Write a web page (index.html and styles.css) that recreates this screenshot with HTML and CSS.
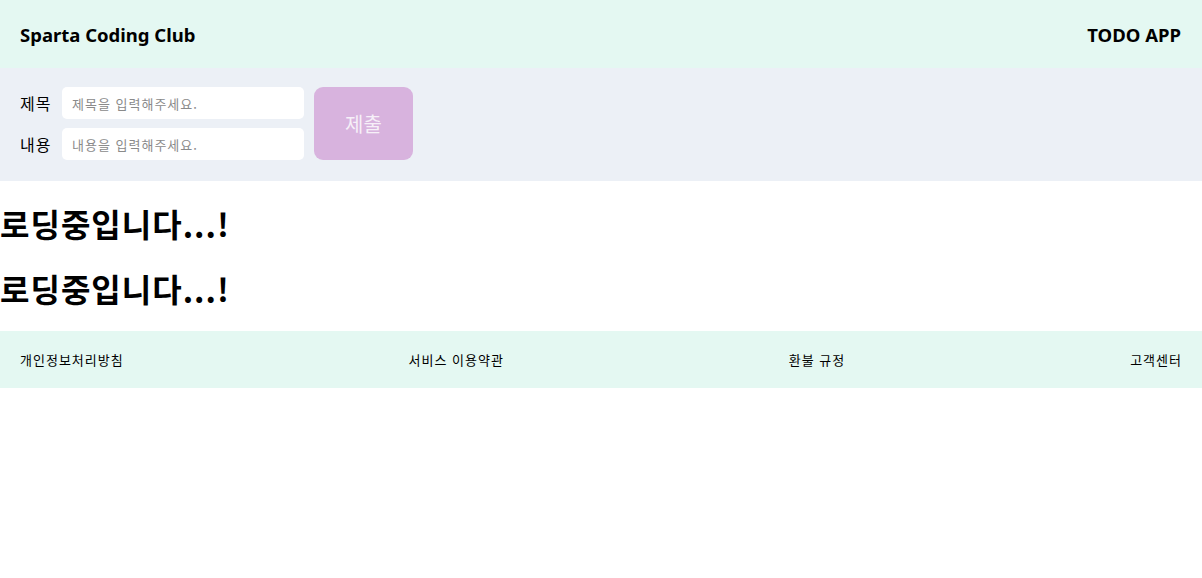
FILE: index.html
```html
<!DOCTYPE html>
<html lang="ko">
<head>
<meta charset="utf-8">
<title>TODO APP</title>
<link rel="stylesheet" href="styles.css">
</head>
<body>
<header class="top">
  <div class="brand">Sparta Coding Club</div>
  <div class="brand">TODO APP</div>
</header>
<section class="form-area">
  <div class="fields">
    <div class="row"><label class="lbl">제목</label><input class="inp" type="text" placeholder="제목을 입력해주세요."></div>
    <div class="row"><label class="lbl">내용</label><input class="inp" type="text" placeholder="내용을 입력해주세요."></div>
  </div>
  <button class="submit" type="button">제출</button>
</section>
<main>
  <h1 class="loading">로딩중입니다...!</h1>
  <h1 class="loading">로딩중입니다...!</h1>
</main>
<footer class="foot">
  <span>개인정보처리방침</span>
  <span>서비스 이용약관</span>
  <span>환불 규정</span>
  <span class="last">고객센터</span>
</footer>
</body>
</html>
```
FILE: styles.css
```css
html, body {
  margin: 0;
  padding: 0;
  background: #fff;
  color: #000;
  font-family: "Noto Sans", "Noto Sans CJK KR", sans-serif;
}
.top {
  height: 68px;
  box-sizing: border-box;
  padding: 0 21px 0 20px;
  display: flex;
  align-items: center;
  justify-content: space-between;
  background: #e4f8f2;
}
.brand {
  font-weight: 700;
  font-size: 18.5px;
}
.form-area {
  height: 113px;
  box-sizing: border-box;
  background: #ecf0f6;
  padding: 19px 20px 0 20px;
  display: flex;
  align-items: flex-start;
  gap: 10px;
}
.fields {
  display: flex;
  flex-direction: column;
  gap: 9px;
}
.row {
  display: flex;
  align-items: center;
  gap: 10px;
}
.lbl {
  font-size: 16px;
  letter-spacing: 1px;
  font-family: "Noto Sans CJK KR", sans-serif;
  width: 32px;
}
.inp {
  width: 242px;
  height: 32px;
  box-sizing: border-box;
  border: none;
  border-radius: 5px;
  background: #fff;
  padding: 0 10px;
  font-size: 13px;
  letter-spacing: 1px;
  font-family: "Noto Sans CJK KR", sans-serif;
  outline: none;
}
.inp::placeholder {
  color: #8a8a8a;
}
.submit {
  width: 99px;
  height: 73px;
  border: none;
  border-radius: 9px;
  background: #d8b3de;
  color: #f6f0f8;
  font-size: 20px;
  font-family: "Noto Sans CJK KR", sans-serif;
  padding: 0;
}
.loading {
  font-size: 32px;
  line-height: 43px;
  letter-spacing: 1px;
  font-weight: 700;
  margin: 21.44px 0;
  font-family: "Noto Sans CJK KR", sans-serif;
}
main {
  overflow: hidden;
}
.foot {
  height: 57px;
  box-sizing: border-box;
  padding: 0 20px 0 20px;
  display: flex;
  align-items: center;
  justify-content: space-between;
  background: #e4f8f2;
  font-size: 13px;
  letter-spacing: 1px;
  font-family: "Noto Sans CJK KR", sans-serif;
}
```
